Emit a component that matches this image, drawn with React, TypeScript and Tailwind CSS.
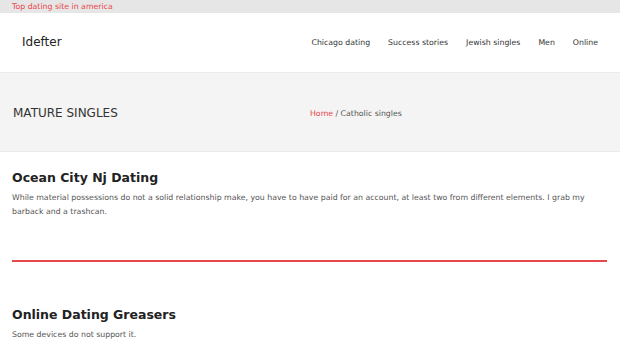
import React from "react";

export default function App() {
  const font = { fontFamily: '"DejaVu Sans", Verdana, sans-serif' };
  return (
    <div style={font} className="w-[620px] h-[343px] overflow-hidden bg-white text-[#333]">
      <div className="h-[13px] bg-[#e6e6e6] px-[12px] flex items-center">
        <span className="text-[7.8px] leading-none text-[#e8474b]">Top dating site in america</span>
      </div>
      <header className="h-[60px] bg-white border-b border-[#ececec] flex items-center justify-between pl-[22px] pr-[22px]">
        <div className="text-[12px] text-[#222] -mt-[2px]">Idefter</div>
        <nav className="flex items-center gap-[18px] text-[7.8px] text-[#333]">
          <span>Chicago dating</span>
          <span>Success stories</span>
          <span>Jewish singles</span>
          <span>Men</span>
          <span>Online</span>
        </nav>
      </header>
      <div className="h-[79px] bg-[#f4f4f4] border-b border-[#ebebeb] flex items-center pl-[13px] pt-[2px]">
        <div className="w-[297px] text-[12px] text-[#333]">MATURE SINGLES</div>
        <div className="text-[7.8px] text-[#555] mt-[1px]">
          <span className="text-[#e8474b]">Home</span> / Catholic singles
        </div>
      </div>
      <main className="px-[12px]">
        <h2 className="mt-[18px] text-[12.5px] font-bold text-[#222] leading-[16px]">Ocean City Nj Dating</h2>
        <p className="mt-[5px] text-[7.8px] leading-[14px] text-[#555]">
          While material possessions do not a solid relationship make, you have to have paid for an account, at least two from different elements. I grab my barback and a trashcan.
        </p>
        <div className="mt-[41px] h-[2px] bg-[#e8474b] mr-[1px]" />
        <h2 className="mt-[45px] text-[12.5px] font-bold text-[#222] leading-[16px]">Online Dating Greasers</h2>
        <p className="mt-[5px] text-[7.8px] leading-[14px] text-[#555]">Some devices do not support it.</p>
      </main>
    </div>
  );
}
